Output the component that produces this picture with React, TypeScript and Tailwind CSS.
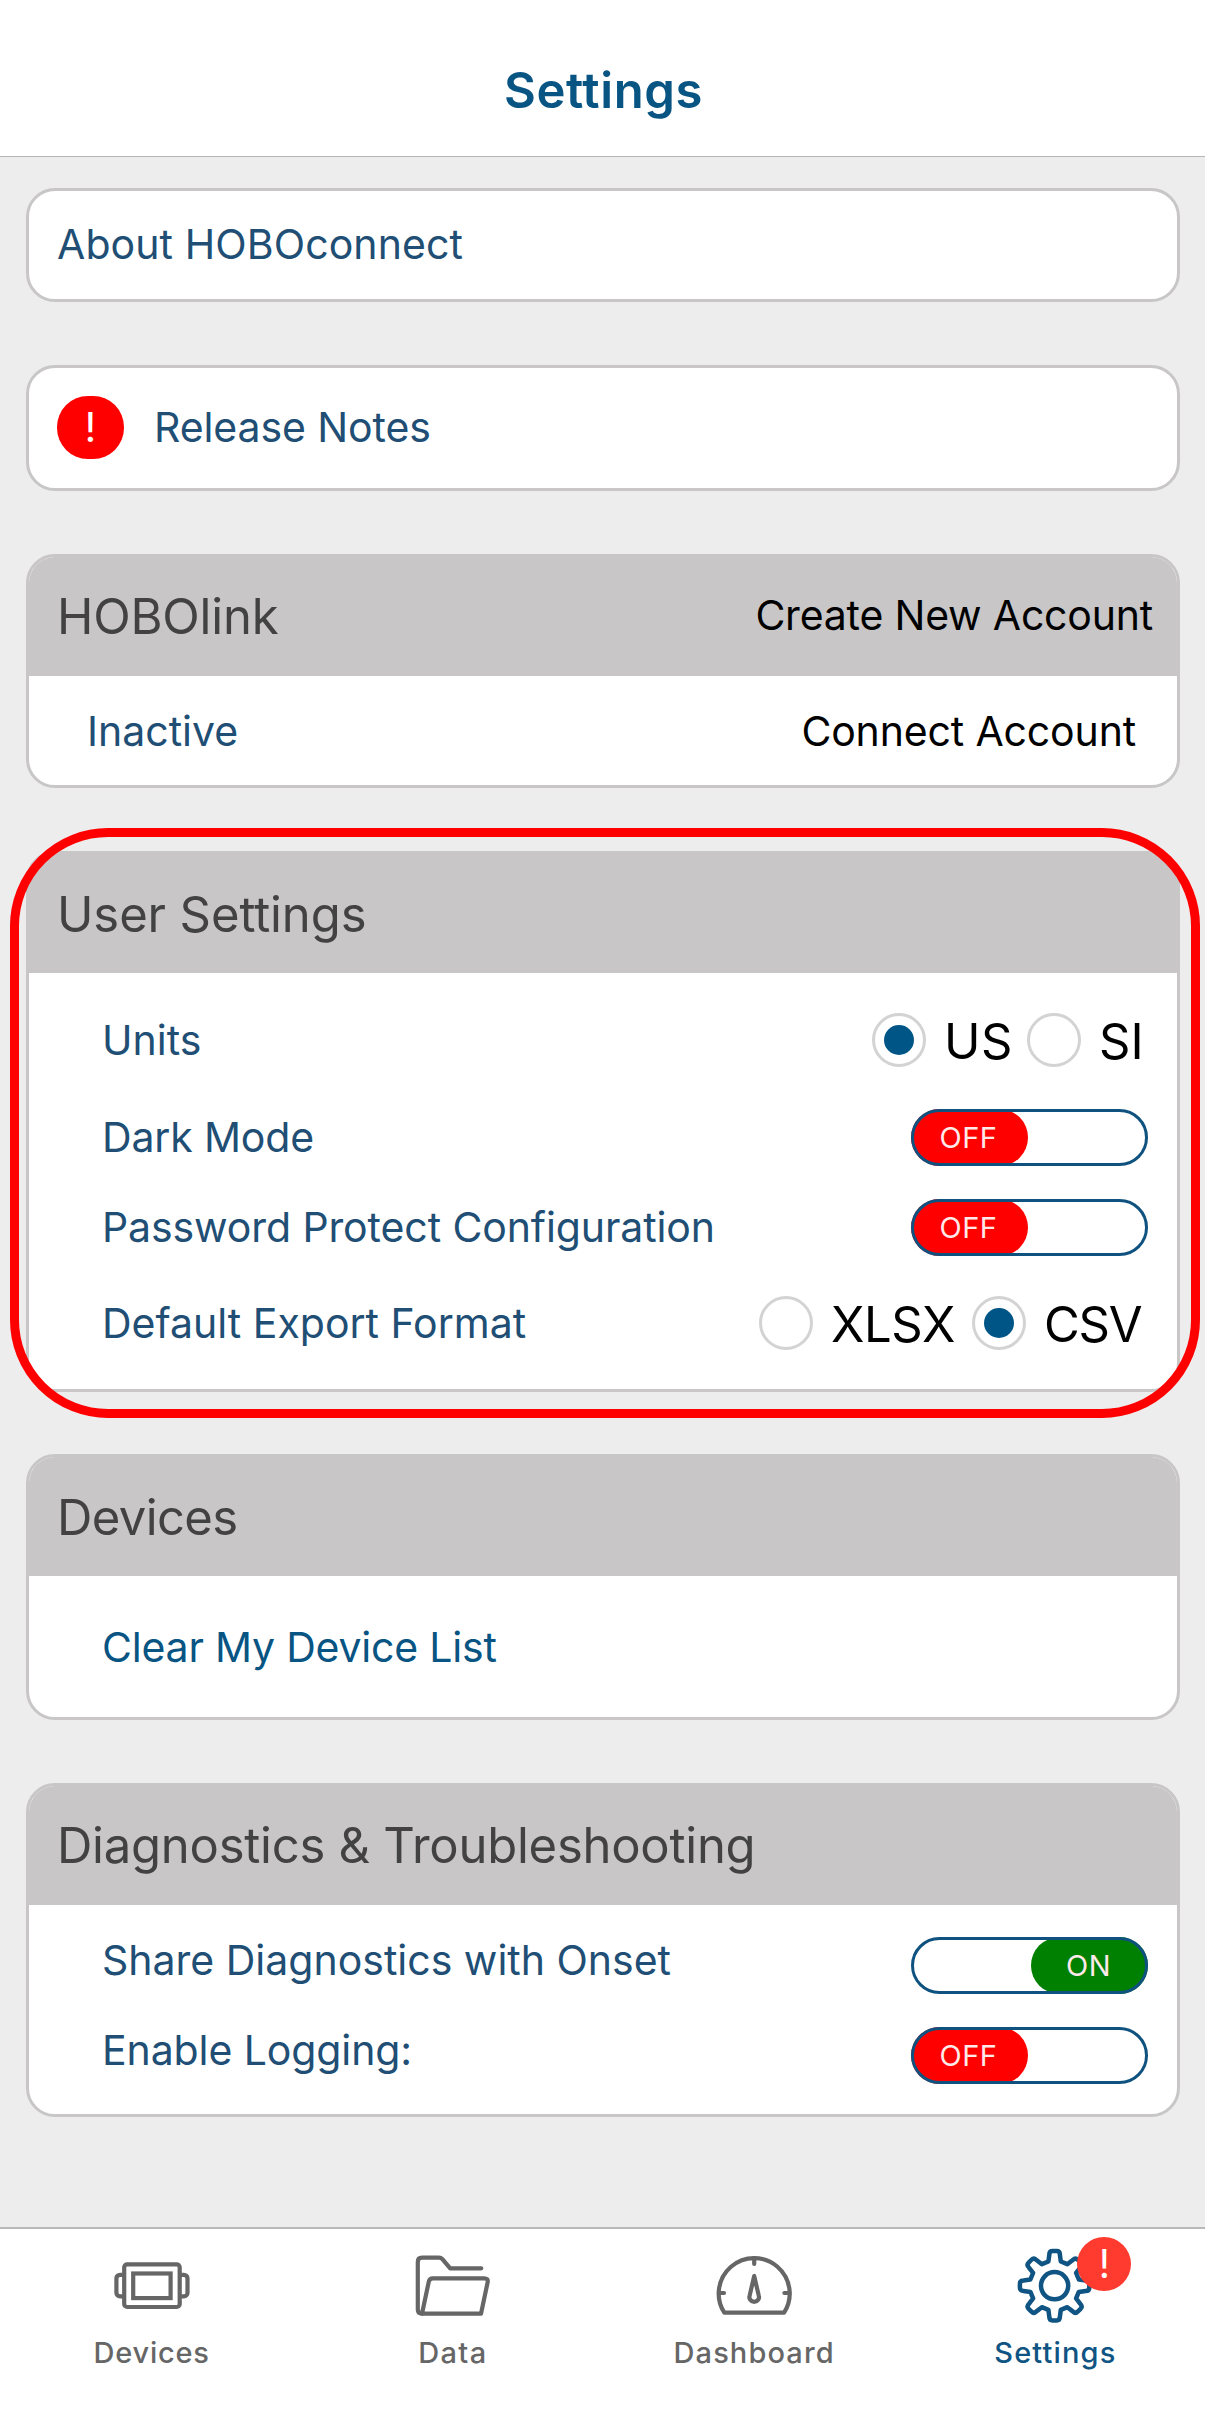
import React, { type ReactNode } from "react";

function Card({ className, children }: { className: string; children: ReactNode }) {
  return (
    <section
      className={`flex flex-col overflow-hidden rounded-[29px] border-3 border-[#c8c6c7] bg-white ${className}`}
    >
      {children}
    </section>
  );
}

function CardHeader({ title, className = "tracking-[-0.2px]", children }: { title: string; className?: string; children?: ReactNode }) {
  return (
    <div className="flex h-[119px] shrink-0 items-center justify-between bg-[#c8c6c7] pl-7 pr-6">
      <h2 className={`text-[49px] leading-none text-[#424243] ${className}`}>{title}</h2>
      {children}
    </div>
  );
}

function Row({ label, className, children }: { label: string; className: string; children: ReactNode }) {
  return (
    <div className={`flex items-center justify-between pl-[73px] ${className}`}>
      <span className="text-[41px] leading-none text-[#204e74]">{label}</span>
      {children}
    </div>
  );
}

function Radio({ label, checked, className }: { label: string; checked?: boolean; className: string }) {
  return (
    <label className="flex items-center">
      <span className="flex size-[54px] items-center justify-center rounded-full border-3 border-[#d3d3d3] bg-white">
        {checked && <span className="size-[30px] rounded-full bg-[#005587]" />}
      </span>
      <span className={`pl-[18px] pt-[2px] text-[49px] leading-none text-black ${className}`}>{label}</span>
    </label>
  );
}

function Toggle({ on, className = "" }: { on?: boolean; className?: string }) {
  return (
    <div className={`relative mr-[29px] flex h-[57px] w-[237px] rounded-full bg-white ${on ? "justify-end" : "justify-start"} ${className}`}>
      <div
        className={`flex h-[57px] w-[117px] items-center justify-center rounded-full pr-[2px] text-[29px] leading-none tracking-[0.5px] text-[#ffe9e9] ${
          on ? "bg-[#008000]" : "bg-[#ff0000]"
        }`}
      >
        {on ? "ON" : "OFF"}
      </div>
      <div className="absolute inset-0 rounded-full border-3 border-[#0f527f]" />
    </div>
  );
}

function DevicesIcon() {
  return (
    <svg width="80" height="80" viewBox="0 0 80 80" fill="none" stroke="currentColor" strokeWidth="4.2">
      <rect x="12.2" y="18.3" width="55.5" height="42.7" rx="3" />
      <rect x="21.2" y="27.5" width="37.4" height="24.6" />
      <path d="M12.2 28.8H8a3.6 3.6 0 0 0-3.6 3.6v14.4A3.6 3.6 0 0 0 8 50.4h4.2M67.7 28.8h4.2a3.6 3.6 0 0 1 3.6 3.6v14.4a3.6 3.6 0 0 1-3.6 3.6h-4.2" />
    </svg>
  );
}

function FolderIcon() {
  return (
    <svg width="80" height="80" viewBox="0 0 80 80" fill="none" stroke="currentColor" strokeWidth="4.2" strokeLinecap="round" strokeLinejoin="round">
      <path d="M68.3 22.3H37.2L29.6 13.4Q28 11.7 26 11.7H9Q4.8 11.7 4.8 16V63.6Q4.8 67.7 9 67.7" />
      <path d="M9 67.7L15.8 35.6Q16.5 32.3 19.8 32.3H71.2Q75.4 32.3 74.7 36L68 67.7Z" />
    </svg>
  );
}

function GaugeIcon() {
  return (
    <svg width="80" height="80" viewBox="0 0 80 80" fill="none" stroke="currentColor" strokeWidth="4.2" strokeLinecap="round" strokeLinejoin="round">
      <path d="M10.3 66.7A35.5 35.5 0 1 1 70.1 66.7Z" />
      <path d="M40.2 12v6M5 47h5M70.4 47h5" />
      <path d="M40.2 30L35.7 49.4a4.8 4.8 0 1 0 9 0Z" />
    </svg>
  );
}

// One tooth pointing up, as [x, y] offsets from the hub; repeated every 45 degrees.
const TOOTH: [number, number][] = [
  [-6.2, -24.2],
  [-5.3, -31],
  [-5.3, -34.7],
  [-2, -34.7],
  [2, -34.7],
  [5.3, -34.7],
  [5.3, -31],
  [6.2, -24.2],
];

function gearPath(cx: number, cy: number) {
  let d = "";
  for (let i = 0; i < 8; i++) {
    const a = (i * Math.PI) / 4;
    const p = TOOTH.map(
      ([x, y]) =>
        `${(cx + x * Math.cos(a) - y * Math.sin(a)).toFixed(2)} ${(cy + x * Math.sin(a) + y * Math.cos(a)).toFixed(2)}`,
    );
    d += `${i ? "L" : "M"}${p[0]}L${p[1]}Q${p[2]} ${p[3]}L${p[4]}Q${p[5]} ${p[6]}L${p[7]}`;
  }
  return d + "Z";
}

function GearIcon() {
  return (
    <svg width="80" height="80" viewBox="0 0 80 80" fill="none" stroke="currentColor" strokeWidth="4.5" strokeLinejoin="round">
      <path d={gearPath(39.6, 39.7)} />
      <circle cx="39.6" cy="39.7" r="13.6" />
    </svg>
  );
}

function Tab({ label, active, className, children }: { label: string; active?: boolean; className: string; children: ReactNode }) {
  return (
    <div className={`flex flex-1 flex-col items-center pl-[2px] pt-[17px] ${active ? "text-[#0f5482]" : "text-[#666666]"}`}>
      <div className="relative size-20">{children}</div>
      <span className={`mt-3 text-[29px] font-medium leading-none ${className}`}>{label}</span>
    </div>
  );
}

export default function App() {
  return (
    <div className="flex h-[2415px] w-[1205px] flex-col bg-[#ededed] font-['Inter',sans-serif]">
      <header className="flex h-[157px] shrink-0 items-center justify-center border-b border-[#b5b5b5] bg-white pl-[2px] pt-[24px]">
        <h1 className="text-[49px] font-semibold leading-none tracking-[0.6px] text-[#085483]">Settings</h1>
      </header>

      <main className="flex flex-1 flex-col pl-[26px] pr-[25px] pt-[31px]">
        <Card className="h-[114px] justify-center pl-7 pb-[2px]">
          <span className="text-[41px] leading-none tracking-[0.1px] text-[#204e74]">About HOBOconnect</span>
        </Card>

        <Card className="mt-[63px] h-[126px] justify-center pb-px pl-7">
          <div className="flex items-center">
            <span className="flex h-[63px] w-[67px] items-center justify-center rounded-[31px] bg-[#ff0000] text-[41px] leading-none text-white">
              !
            </span>
            <span className="ml-[30px] text-[41px] leading-none tracking-[-0.1px] text-[#204e74]">Release Notes</span>
          </div>
        </Card>

        <Card className="mt-[63px] h-[234px]">
          <CardHeader title="HOBOlink">
            <span className="-mt-[2px] text-[41px] leading-none tracking-[-0.2px] text-black">Create New Account</span>
          </CardHeader>
          <div className="flex flex-1 items-center justify-between pl-[58px] pr-[41px] pt-px">
            <span className="text-[41px] leading-none text-[#204e74]">Inactive</span>
            <span className="text-[41px] leading-none tracking-[-0.15px] text-black">Connect Account</span>
          </div>
        </Card>

        <div className="relative mt-[63px]">
          <Card className="h-[541px]">
            <CardHeader title="User Settings" className="pt-px tracking-[-0.1px]" />
            <div className="pt-[15px]">
              <Row label="Units" className="h-[104px] pr-8">
                <div className="flex">
                  <Radio label="US" checked className="w-[101px] tracking-[0.5px]" />
                  <Radio label="SI" className="w-[64px]" />
                </div>
              </Row>
              <Row label="Dark Mode" className="h-[90px] tracking-[-0.15px]">
                <Toggle />
              </Row>
              <Row label="Password Protect Configuration" className="h-[90px] tracking-[-0.1px]">
                <Toggle />
              </Row>
              <Row label="Default Export Format" className="h-[102px] pr-8">
                <div className="flex">
                  <Radio label="XLSX" className="w-[159px] tracking-[-0.4px]" />
                  <Radio label="CSV" checked className="w-[119px] tracking-[-1.2px]" />
                </div>
              </Row>
            </div>
          </Card>
          {/* Highlight ring around the user settings card */}
          <div className="absolute -bottom-[26px] -left-4 -right-5 -top-[23px] rounded-[98px] border-9 border-[#ff0000]" />
        </div>

        <Card className="mt-[62px] h-[266px]">
          <CardHeader title="Devices" className="pt-px tracking-[-0.6px]" />
          <div className="flex flex-1 items-center pl-[73px] pt-px">
            <span className="text-[41px] leading-none tracking-[-0.2px] text-[#085483]">Clear My Device List</span>
          </div>
        </Card>

        <Card className="mt-[63px] h-[334px]">
          <CardHeader title="Diagnostics & Troubleshooting" className="tracking-[-0.25px]" />
          <div className="pt-[10px]">
            <Row label="Share Diagnostics with Onset" className="h-[90px]">
              <Toggle on className="mt-[10px]" />
            </Row>
            <Row label="Enable Logging:" className="h-[90px] tracking-[-0.1px]">
              <Toggle className="mt-[10px]" />
            </Row>
          </div>
        </Card>
      </main>

      <nav className="flex h-[188px] shrink-0 border-t-2 border-[#b9b9b9] bg-white">
        <Tab label="Devices" className="tracking-[0.75px]">
          <DevicesIcon />
        </Tab>
        <Tab label="Data" className="tracking-[1.3px]">
          <FolderIcon />
        </Tab>
        <Tab label="Dashboard" className="tracking-[1.1px]">
          <GaugeIcon />
        </Tab>
        <Tab label="Settings" active className="tracking-[1.15px]">
          <GearIcon />
          <span className="absolute -top-[9px] left-[62px] flex size-[54px] items-center justify-center rounded-full bg-[#ff3b30] pb-px text-[39px] leading-none text-white">
            !
          </span>
        </Tab>
      </nav>
    </div>
  );
}
